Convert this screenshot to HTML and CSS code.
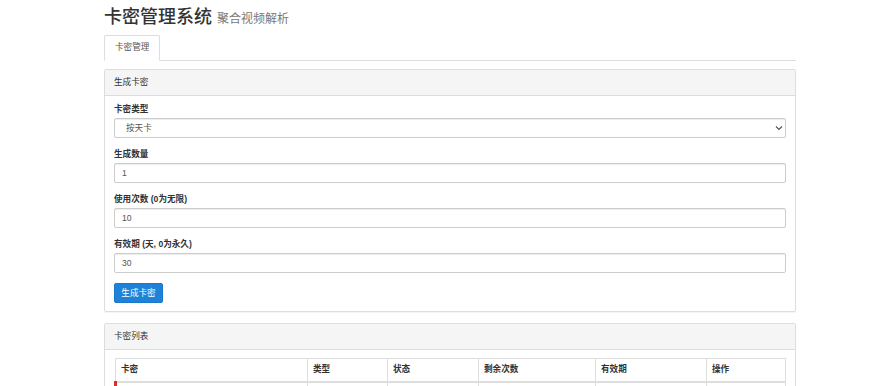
FILE: index.html
```html
<!DOCTYPE html>
<html lang="zh">
<head>
<meta charset="utf-8">
<title>卡密管理系统</title>
<link rel="stylesheet" href="styles.css">
</head>
<body>
<div class="container">
  <h2 class="title">卡密管理系统 <small>聚合视频解析</small></h2>
  <ul class="tabs">
    <li class="tab active">卡密管理</li>
  </ul>
  <div class="panel">
    <div class="panel-heading">生成卡密</div>
    <div class="panel-body">
      <div class="group">
        <label class="label">卡密类型</label>
        <div class="control select">按天卡<svg class="caret" width="8" height="6" viewBox="0 0 8 6"><path d="M1 1.5 L4 4.5 L7 1.5" fill="none" stroke="#555" stroke-width="1.2"/></svg></div>
      </div>
      <div class="group">
        <label class="label">生成数量</label>
        <div class="control">1</div>
      </div>
      <div class="group">
        <label class="label">使用次数 (0为无限)</label>
        <div class="control">10</div>
      </div>
      <div class="group">
        <label class="label">有效期 (天, 0为永久)</label>
        <div class="control">30</div>
      </div>
      <button class="btn">生成卡密</button>
    </div>
  </div>
  <div class="panel">
    <div class="panel-heading">卡密列表</div>
    <div class="panel-body">
      <table class="table">
        <thead>
          <tr>
            <th class="c1">卡密</th>
            <th class="c2">类型</th>
            <th class="c3">状态</th>
            <th class="c4">剩余次数</th>
            <th class="c5">有效期</th>
            <th class="c6">操作</th>
          </tr>
        </thead>
        <tbody>
          <tr class="row-danger"><td></td><td></td><td></td><td></td><td></td><td></td></tr>
        </tbody>
      </table>
    </div>
  </div>
</div>
</body>
</html>
```
FILE: styles.css
```css
* { box-sizing: border-box; }
html, body { margin: 0; padding: 0; background: #fff; }
body {
  font-family: "Liberation Sans", "Noto Sans CJK SC", sans-serif;
  font-size: 8.6px;
  line-height: 1.43;
  color: #333;
}
.container {
  width: 692px;
  margin-left: 104px;
}
.title {
  margin: 7px 0 5px;
  font-size: 18px;
  line-height: 21px;
  font-weight: 500;
  color: #333;
}
.title small {
  font-size: 12px;
  font-weight: 400;
  color: #777;
}
.tabs {
  list-style: none;
  margin: 0 0 8px;
  padding: 0;
  display: flex;
  border-bottom: 1px solid #ddd;
}
.tab {
  margin-bottom: -1px;
  padding: 5px 10px 6px;
  line-height: 13px;
  color: #555;
  border: 1px solid #ddd;
  border-bottom-color: transparent;
  border-radius: 2px 2px 0 0;
  background: #fff;
}
.panel {
  border: 1px solid #ddd;
  border-radius: 2px;
  margin-bottom: 11px;
  box-shadow: 0 1px 1px rgba(0,0,0,.05);
}
.panel-heading {
  background: #f5f5f5;
  border-bottom: 1px solid #ddd;
  padding: 6px 9px;
  height: 26px;
  line-height: 13px;
  color: #333;
}
.panel-body {
  padding: 7px 9px 8px;
}
.group { margin-bottom: 10px; }
.label {
  display: block;
  font-weight: 700;
  line-height: 13px;
  margin-bottom: 2px;
}
.control {
  height: 20px;
  border: 1px solid #ccc;
  border-radius: 2px;
  padding: 0 7px;
  line-height: 18px;
  color: #555;
  box-shadow: inset 0 1px 1px rgba(0,0,0,.075);
  background: #fff;
}
.select {
  display: flex;
  align-items: center;
  justify-content: space-between;
  padding-left: 11px;
  padding-right: 2px;
}
.caret { display: block; }
.btn {
  font-family: inherit;
  font-size: 8.6px;
  height: 20px;
  width: 49px;
  padding: 0;
  border: 1px solid #1a78c9;
  border-radius: 2px;
  background: #1e83d8;
  color: #fff;
  line-height: 18px;
  margin-top: 0;
  display: block;
}
.table {
  width: 100%;
  border-collapse: collapse;
  margin-top: 1px;
}
.table th, .table td {
  border: 1px solid #ddd;
  padding: 4px 5px;
  text-align: left;
  height: 23px;
  line-height: 13px;
}
.table th { font-weight: 700; border-bottom-width: 2px; }
.c1 { width: 192px; }
.c2 { width: 80px; }
.c3 { width: 91px; }
.c4 { width: 117px; }
.c5 { width: 111px; }
.row-danger td:first-child { border-left: 3px solid #d9302e; }
```
